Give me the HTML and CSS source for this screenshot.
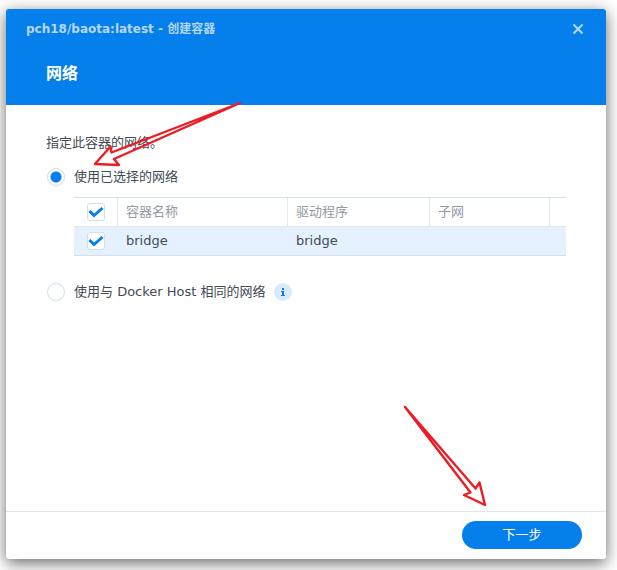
FILE: index.html
```html
<!DOCTYPE html>
<html lang="zh-CN">
<head>
<meta charset="utf-8">
<meta name="viewport" content="width=device-width, initial-scale=1">
<title>创建容器</title>
<link rel="stylesheet" href="styles.css">
</head>
<body>
<main class="dialog">
  <header class="header">
    <div class="titlebar">
      <span class="title">pch18/baota:latest - 创建容器</span>
      <button class="close" type="button" aria-label="关闭">
        <svg viewBox="0 0 12 12" width="12" height="12"><path d="M1.5 1.5 10.5 10.5M10.5 1.5 1.5 10.5"/></svg>
      </button>
    </div>
    <h1 class="heading">网络</h1>
  </header>
  <form class="content">
    <p class="intro">指定此容器的网络。</p>
    <label class="option"><input class="radio" type="radio" name="net" checked>使用已选择的网络</label>
    <table class="grid">
      <colgroup><col class="col-check"><col class="col-name"><col class="col-driver"><col class="col-subnet"><col></colgroup>
      <thead>
        <tr>
          <th class="check-cell"><input class="check" type="checkbox" aria-label="全选" checked></th>
          <th>容器名称</th><th>驱动程序</th><th>子网</th><th></th>
        </tr>
      </thead>
      <tbody>
        <tr>
          <td class="check-cell"><input class="check" type="checkbox" aria-label="bridge" checked></td>
          <td>bridge</td><td>bridge</td><td></td><td></td>
        </tr>
      </tbody>
    </table>
    <div class="option-row">
      <label class="option"><input class="radio" type="radio" name="net">使用与 Docker Host 相同的网络</label>
      <svg class="info" viewBox="0 0 18 18" width="18" height="18" aria-hidden="true">
        <circle cx="9" cy="9" r="9" fill="#d9eaff"/>
        <path fill="#057feb" d="M8 5h2v2H8zM7 8h3v4h1v1H7v-1h1V9H7z"/>
      </svg>
    </div>
  </form>
  <footer class="footer">
    <button class="next" type="button">下一步</button>
  </footer>
  <svg class="arrow arrow-option" viewBox="0 0 152 68" width="152" height="68" aria-hidden="true">
    <path d="M148 4 19.500 53.500 18.500 47.500 3 65 27 66 22 60Z"/>
  </svg>
  <svg class="arrow arrow-next" viewBox="0 0 86 104" width="86" height="104" aria-hidden="true">
    <path d="M3 3 68.500 88.500 62 91 83 101 77.500 78.500 73.500 84.500Z"/>
  </svg>
</main>
</body>
</html>
```
FILE: styles.css
```css
* {
  box-sizing: border-box;
}

body {
  display: flex;
  min-height: 100vh;
  margin: 0;
  padding: 9px 11px 11px 6px;
  background: #fff;
  color: #414b55;
  font: 13px/20px "DejaVu Sans", "Noto Sans CJK SC", sans-serif;
}

button,
input {
  margin: 0;
  font: inherit;
}

.dialog {
  position: relative;
  display: flex;
  flex: 1;
  flex-direction: column;
  border-radius: 3px;
  background: #fff;
  box-shadow: 0 4px 16px rgba(0, 0, 0, 0.6);
}

.header {
  padding: 10px 20px 19px;
  border-radius: 3px 3px 0 0;
  background: #057feb;
}

.titlebar {
  display: flex;
  align-items: center;
  justify-content: space-between;
}

.title {
  color: #b4d8f9;
  font-size: 12px;
  font-weight: bold;
}

.close {
  display: flex;
  padding: 2px;
  border: 0;
  background: none;
}

.close path {
  fill: none;
  stroke: #b4d8f9;
  stroke-width: 2;
}

.heading {
  margin: 23px 20px 0;
  color: #fff;
  font-size: 16px;
  line-height: 24px;
}

.content {
  flex: 1;
  padding: 28px 40px;
}

.intro {
  margin: 0 0 14px;
}

.option {
  display: flex;
  align-items: center;
  gap: 9px;
}

.option-row {
  display: flex;
  align-items: center;
  gap: 8px;
  margin-top: 26px;
}

.radio {
  width: 18px;
  height: 18px;
  margin-left: 1px;
  border: 1px solid #cfdfee;
  border-radius: 50%;
  appearance: none;
}

.radio:checked {
  background: radial-gradient(circle, #057feb 5px, #fff 6px);
}

.grid {
  width: calc(100% - 28px);
  margin: 10px 0 0 28px;
  border-top: 1px solid #d0e0ee;
  border-spacing: 0;
  table-layout: fixed;
}

.col-check {
  width: 44px;
}

.col-name {
  width: 170px;
}

.col-driver {
  width: 142px;
}

.col-subnet {
  width: 120px;
}

.grid th,
.grid td {
  height: 29px;
  padding: 0 8px;
  border-bottom: 1px solid #e4e8f0;
  text-align: left;
}

.grid th {
  border-right: 1px solid #e4e8f0;
  color: #919aa3;
  font-weight: normal;
}

.grid th:last-child {
  border-right: 0;
}

.grid td {
  border-bottom-color: #d0e0ee;
  background: #e5f1ff;
}

.grid .check-cell {
  padding: 0 0 0 13px;
}

.check {
  display: block;
  width: 18px;
  height: 18px;
  border: 1px solid #cfdfee;
  border-radius: 3px;
  background: #fff;
  appearance: none;
}

.check:checked {
  background: #fff url("data:image/svg+xml,%3Csvg xmlns='http://www.w3.org/2000/svg' viewBox='0 0 16 16'%3E%3Cpath d='M1.500 7 6 11.500 14.500 4' fill='none' stroke='%23057feb' stroke-width='3'/%3E%3C/svg%3E") center / 16px 16px;
}

.footer {
  display: flex;
  justify-content: flex-end;
  padding: 9px 24px 10px;
  border-top: 1px solid #dfe6ec;
}

.next {
  width: 120px;
  height: 28px;
  border: 0;
  border-radius: 14px;
  background: #057feb;
  color: #fff;
}

.arrow {
  position: absolute;
  pointer-events: none;
}

.arrow path {
  fill: none;
  stroke: #ed1c24;
  stroke-linecap: round;
  stroke-linejoin: round;
  stroke-width: 2.4;
}

.arrow-option {
  top: 90px;
  left: 86px;
}

.arrow-next {
  right: 118px;
  bottom: 51px;
}
```
